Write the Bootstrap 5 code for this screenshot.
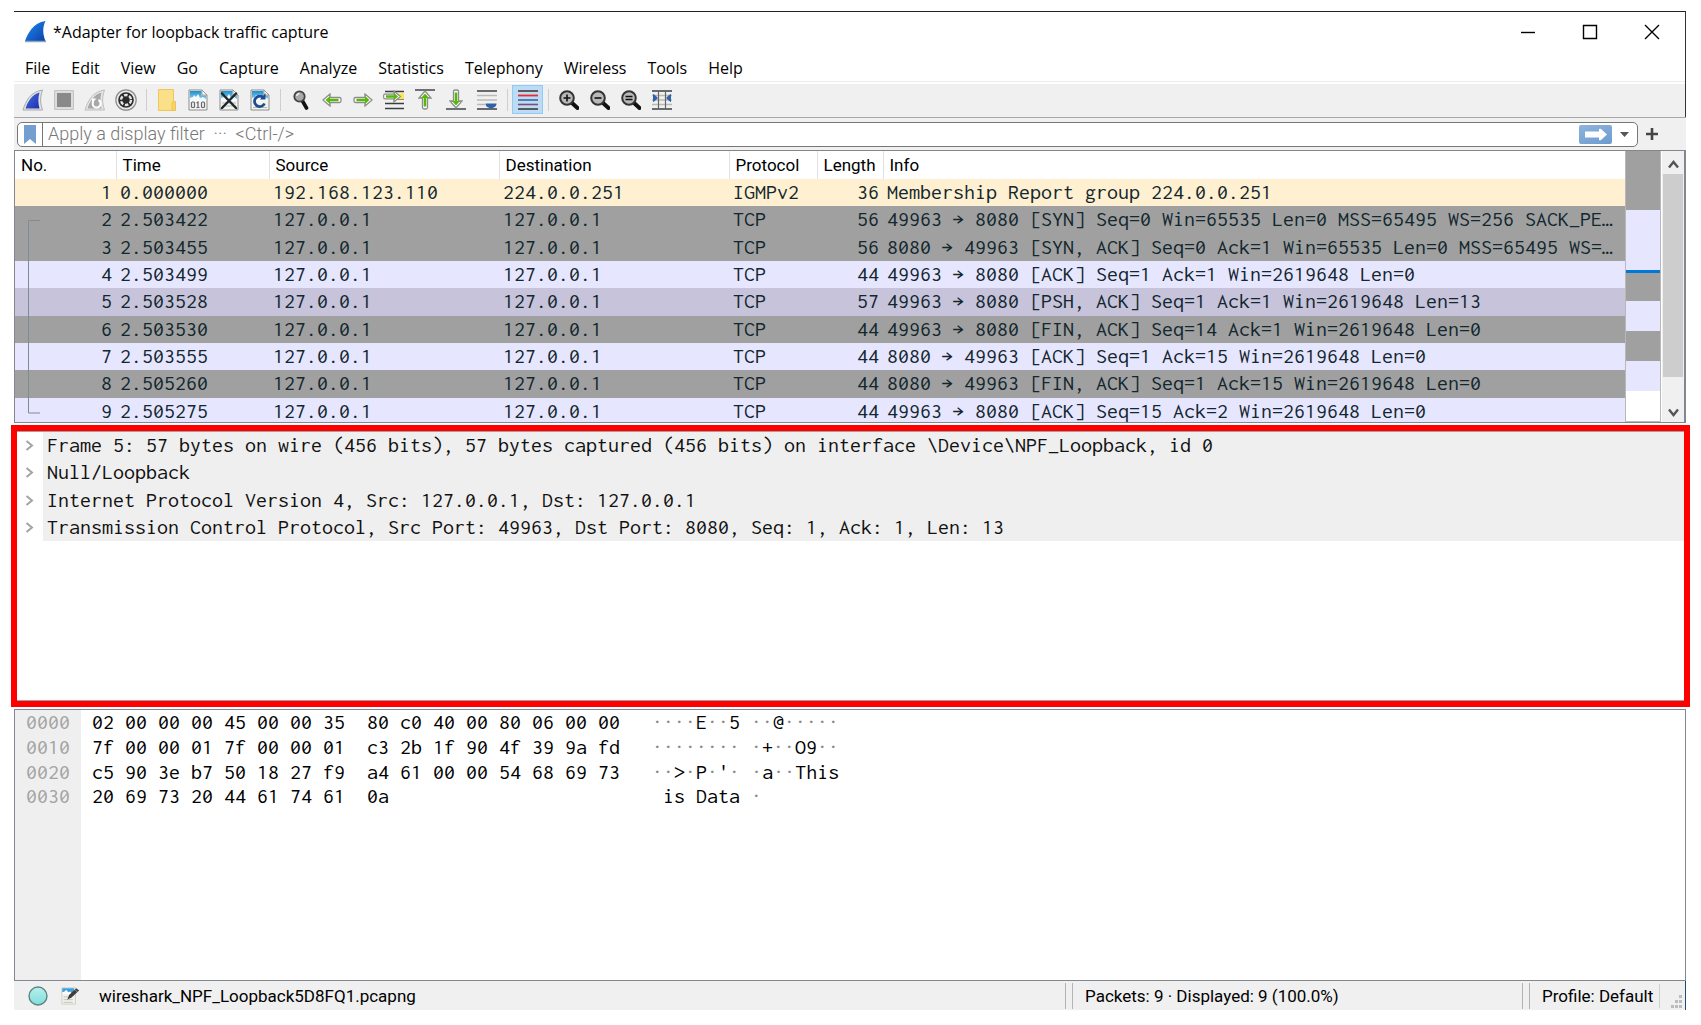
<!DOCTYPE html>
<html lang="en">
<head>
<meta charset="utf-8">
<meta name="viewport" content="width=device-width, initial-scale=1">
<title>*Adapter for loopback traffic capture</title>
<link href="https://cdn.jsdelivr.net/npm/bootstrap@5.3.0/dist/css/bootstrap.min.css" rel="stylesheet">
<style>
:root{--chrome:#f0f0f0;--edge:#828790;--ink:#12272e}
body{height:100vh;min-height:700px;padding:11px 15px 15px 14px;background:#fff;color:#000;font-family:Roboto,"Liberation Sans",sans-serif;font-size:17px;line-height:24px}
button{font:inherit;color:inherit}
svg{display:block;flex:none}
.appwin{border-top:1px solid #222}
.topzone{border-right:1px solid #333}
.segoe{font-family:"Open Sans","Noto Sans",sans-serif;font-size:16px;padding-left:6px}
.titlebar{height:39px;padding:0 2px 0 10px}
.winbtn{width:62px;height:39px;border:0;background:none;padding:0}
.menubar{height:31px;border-bottom:1px solid #ececec;font-family:"Open Sans","Noto Sans",sans-serif;font-size:16px}
.menubar a{color:#000;text-decoration:none;padding:4px 10px 0 11px;line-height:26px}
.toolbar{height:33px;margin-top:2px;padding:0 0 2px 3px;background:var(--chrome)}
.tool{width:31px;height:29px;border:1px solid transparent;background:none;padding:0}
.tool.on{background:#bddcf4;border-color:#91c9f7}
.toolsep{width:10px;height:22px;display:flex;justify-content:center}
.toolsep::before{content:"";width:1px;background:#cfcfcf}
.filterbar{height:33px;padding:0 4px 0 3px;background:var(--chrome);border-top:1px solid #a8a8a8}
.filterbox{height:25px;border:1px solid #777;border-radius:5px;background:#fff;overflow:hidden}
.filterbox .markbtn{width:25px;border:0;border-right:1px solid #777;background:none;padding:0}
.filterbox input{border:0;outline:0;min-width:0;padding:0 5px;font-size:18px;font-weight:300;color:#444;background:none}
.filterbox input::placeholder{color:#777;opacity:1}
.gobtn{width:33px;height:19px;border:0;border-radius:2px;padding:0;background:linear-gradient(160deg,#8fb4dc,#6d9bd0)}
.plainbtn{border:0;background:none;padding:0}
.pane{border:1px solid var(--edge);background:#fff}
.pktpane{height:273px;border-right-width:2px}
.mono{font-family:Inconsolata,Consolas,"DejaVu Sans Mono",monospace;font-size:22px;line-height:25px;white-space:pre}
.pktlist{height:274px;table-layout:fixed;color:var(--ink);--bs-table-color:var(--ink)}
.pktlist>:not(caption)>*>*{padding:0 4px;height:27px;background:var(--row);color:var(--ink)}
.pktlist thead th{--row:#fff;padding-left:6px;height:28px;font-weight:400;color:#000;border-right:1px solid #e2e2e2;line-height:27px;white-space:nowrap}
.pktlist thead th:last-child{border-right:0}
.c-no{width:101px}.c-time{width:153px}.c-addr{width:230px}.c-proto{width:88px}.c-len{width:66px}
.r-igmp{--row:#fff0d2}.r-syn{--row:#a0a0a0}.r-tcp{--row:#e7e6ff}.r-sel{--row:#c6c3da}
.convline{position:absolute;left:13px;top:69px}
.minimap{width:36px;border:1px solid #b8b8b8;border-width:0 1px 1px}
.scroller{width:23px;flex:none;padding:0 1px;background:#f0f0f0;border-left:1px solid #fff}
.scroller .thumb{height:203px;background:#cdcdcd}
.detail{margin:2px -4px 0 -3px;height:282px;border:6px solid #f00;background:#fff;z-index:1}
.detail-in{border-top:1px solid #a0a0a0;border-bottom:1px solid #a0a0a0}
.tree{height:109px;list-style:none;margin:0;padding:0;color:#111}
.tree li{display:flex;align-items:stretch;flex:1}
.tree .tog{width:26px;border:0;background:none;padding:0 0 0 8px}
.tree span{flex:1;background:#efefef;padding-left:4px}
.hexpane{margin-top:2px}
.gutter{width:66px;background:#efefef;color:#a3a3a3;padding-left:11px}
.hexrows{height:99px;margin-top:1px;display:flex;flex-direction:column}
.hexrows>div{flex:1;line-height:22px}
.hexbytes{padding-left:11px}
.hexascii{padding-left:32px}
.hexascii i{font-style:normal;color:#888}
.statusbar{height:29px;padding-left:14px;background:var(--chrome);border-right:1px solid #1f4a73}
.filename{padding-left:19px}
.grips{width:8px;height:26px;border:1px solid #b4b4b4;border-width:0 1px}
.grips{flex:none}
.st-packets{width:449px;padding-left:12px}
.st-profile{width:130px;padding-left:12px;border-right:1px solid #cfcfcf}
</style>
<script src="https://cdn.jsdelivr.net/npm/bootstrap@5.3.0/dist/js/bootstrap.bundle.min.js"></script>
</head>
<body>
<svg width="0" height="0" class="position-absolute" aria-hidden="true">
<defs>
<linearGradient id="gfin" x1="0" y1="0" x2="1" y2="1"><stop offset="0" stop-color="#1f8df2"/><stop offset="1" stop-color="#0b3fa8"/></linearGradient>
<linearGradient id="gfin2" x1="0" y1="0" x2="1" y2="1"><stop offset="0" stop-color="#4a6fe0"/><stop offset="1" stop-color="#1c2fb0"/></linearGradient>
<linearGradient id="gsky" x1="0" y1="0" x2="0" y2="1"><stop offset="0" stop-color="#1f8fd0"/><stop offset="1" stop-color="#8fd0f0"/></linearGradient>
<linearGradient id="gled" x1="0" y1="0" x2="0" y2="1"><stop offset="0" stop-color="#b8f0ee"/><stop offset="1" stop-color="#7fdedb"/></linearGradient>
<symbol id="doc" viewBox="0 0 20 22"><path d="M1 1h13l5 5v15H1z" fill="#f4f4ee" stroke="#8a8f8c"/><path d="M2 2h11.500v4.500H18V11H2z" fill="url(#gsky)"/><path d="M2 12V9l3-1 1-2 2 2 2-3 2 4 3-1 3 2v2z" fill="#f7faf9"/><path d="M14 1v5h5z" fill="#fff" stroke="#8a8f8c" stroke-width=".8"/></symbol>
<symbol id="arr" viewBox="0 0 20 14"><path d="M1 7l7-6v3.500h9.500q1.500 0 1.500 1.500v2q0 1.500-1.500 1.500H8V13z" fill="#fff" stroke="#8c8c8c" stroke-width="1.300"/><path d="M3.500 7L8 3v2.700h8.500v2.600H8V11z" fill="#57b80a"/></symbol>
<symbol id="lens" viewBox="0 0 20 20"><path d="M12.500 12.500l6 5.500" stroke="#111" stroke-width="4" stroke-linecap="round"/><circle cx="8" cy="8" r="6.800" fill="#b9b9b9" stroke="#333" stroke-width="2"/></symbol>
</defs>
</svg>
<div class="appwin d-flex flex-column h-100">
 <div class="topzone">
  <header class="titlebar d-flex align-items-center">
   <svg width="23" height="23" viewBox="0 0 23 23"><path d="M1 21C4 13 9 3 21.500 1 18.500 7 18.500 14 21.500 21z" fill="url(#gfin)"/><path d="M1 21.500h21" stroke="#8ea4b8" stroke-width="1.500"/></svg>
   <div class="segoe flex-grow-1">*Adapter for loopback traffic capture</div>
   <button class="winbtn d-flex align-items-center justify-content-center" aria-label="Minimize"><svg width="16" height="16"><path d="M1 8.500h14" stroke="#000" stroke-width="1.400"/></svg></button>
   <button class="winbtn d-flex align-items-center justify-content-center" aria-label="Maximize"><svg width="16" height="16"><path d="M1.500 1.500h13v13h-13z" fill="none" stroke="#000" stroke-width="1.400"/></svg></button>
   <button class="winbtn d-flex align-items-center justify-content-center" aria-label="Close"><svg width="16" height="16"><path d="M1 1l14 14M15 1L1 15" stroke="#000" stroke-width="1.400"/></svg></button>
  </header>
  <nav class="menubar d-flex" aria-label="Menu"><a href="#">File</a><a href="#">Edit</a><a href="#">View</a><a href="#">Go</a><a href="#">Capture</a><a href="#">Analyze</a><a href="#">Statistics</a><a href="#">Telephony</a><a href="#">Wireless</a><a href="#">Tools</a><a href="#">Help</a></nav>
  <div class="toolbar d-flex align-items-center" role="toolbar">
   <button class="tool d-flex align-items-center justify-content-center" aria-label="Start capture"><svg width="22" height="22" viewBox="0 0 22 22"><path d="M1 21C4 12 8 3 20.500 1 18 8 18 14 20.500 21z" fill="#e4e4e4" stroke="#a9a9a9"/><path d="M3.500 19.500C6 12 10 5.500 17.500 3.500 16 9 16 14 17.500 19.500z" fill="url(#gfin2)"/></svg></button>
   <button class="tool d-flex align-items-center justify-content-center" aria-label="Stop capture"><svg width="20" height="20"><path d="M.5.5h19v19H.5z" fill="#dcdcdc" stroke="#c4c4c4"/><path d="M3 3h14v14H3z" fill="#8a8a8a"/></svg></button>
   <button class="tool d-flex align-items-center justify-content-center" aria-label="Restart capture"><svg width="22" height="22" viewBox="0 0 22 22"><path d="M1 21C4 12 8 3 20.500 1 18 8 18 14 20.500 21z" fill="#e6e6e6" stroke="#bdbdbd"/><path d="M3.500 19.500C6 12 10 5.500 17.500 3.500 16 9 16 14 17.500 19.500z" fill="#a8a8a8"/><path d="M14.500 11a4 4 0 1 1-5 1" fill="none" stroke="#fff" stroke-width="2"/><path d="M8 14V9.500h4.500z" fill="#fff"/></svg></button>
   <button class="tool d-flex align-items-center justify-content-center" aria-label="Capture options"><svg width="22" height="22" viewBox="0 0 22 22"><circle cx="11" cy="11" r="10.200" fill="#e8e8e8" stroke="#8d8d8d" stroke-width="1.200"/><circle cx="11" cy="11" r="7.800" fill="#2a2a2a"/><circle cx="11" cy="11" r="5" fill="none" stroke="#e4e4e4" stroke-width="2.400" stroke-dasharray="3.600 1.636"/><circle cx="11" cy="11" r="2.600" fill="#2a2a2a"/></svg></button>
   <span class="toolsep"></span>
   <button class="tool d-flex align-items-center justify-content-center" aria-label="Open"><svg width="18" height="22" viewBox="0 0 18 22"><path d="M.5.5h15v12h2v9H.5z" fill="#fbe08a" stroke="#eec65a"/><path d="M14 21.500v-8l2-1.500 1.500 1.500v8z" fill="#f8d368" stroke="#e9bf4f" stroke-width=".8"/></svg></button>
   <button class="tool d-flex align-items-center justify-content-center" aria-label="Save"><svg width="20" height="22" viewBox="0 0 20 22"><use href="#doc"/><g fill="none" stroke="#667" stroke-width="1.200"><rect x="3.500" y="13" width="3" height="5.500" rx="1"/><path d="M8.500 14l1.500-1v5.500M8.500 18.500h3"/><rect x="13.500" y="13" width="3" height="5.500" rx="1"/></g></svg></button>
   <button class="tool d-flex align-items-center justify-content-center" aria-label="Close file"><svg width="20" height="22" viewBox="0 0 20 22"><use href="#doc"/><path d="M3 14h14M3 17h14" stroke="#b8b8b0"/><path d="M3 4.500L17 19M17 4.500L3 19" stroke="#1c2830" stroke-width="2.500" stroke-linecap="round"/></svg></button>
   <button class="tool d-flex align-items-center justify-content-center" aria-label="Reload"><svg width="20" height="22" viewBox="0 0 20 22"><use href="#doc"/><path d="M3 18.500h14" stroke="#b8b8b0"/><path d="M14.500 14.500a5.200 5.200 0 1 1-2-6.500" fill="none" stroke="#1f4c91" stroke-width="2.800"/><path d="M10 10.500L15.500 4v6.500z" fill="#1f4c91"/></svg></button>
   <span class="toolsep"></span>
   <button class="tool d-flex align-items-center justify-content-center" aria-label="Find packet"><svg width="16" height="20" viewBox="0 0 16 20"><path d="M9.500 11l4 7" stroke="#111" stroke-width="3.600" stroke-linecap="round"/><circle cx="6.500" cy="6.500" r="5.200" fill="#a9a9a9" stroke="#444" stroke-width="1.800"/><path d="M3.500 6a3.500 3.500 0 0 1 3-2.500" stroke="#f2f2f2" stroke-width="1.500" fill="none"/></svg></button>
   <button class="tool d-flex align-items-center justify-content-center" aria-label="Previous packet"><svg width="20" height="14"><use href="#arr"/></svg></button>
   <button class="tool d-flex align-items-center justify-content-center" aria-label="Next packet"><svg width="20" height="14" viewBox="0 0 20 14"><use href="#arr" transform="matrix(-1 0 0 1 20 0)" width="20" height="14"/></svg></button>
   <button class="tool d-flex align-items-center justify-content-center" aria-label="Go to packet"><svg width="23" height="20" viewBox="0 0 23 20"><path d="M3 1.500h19M3 13.500h19M3 18.500h19" stroke="#3a3f42" stroke-width="1.600"/><path d="M16 3.500h6v6h-6z" fill="#ffe640"/><path d="M15 9.500h7" stroke="#888"/><g transform="matrix(-1 0 0 1 20 0)"><use href="#arr" width="20" height="13"/></g></svg></button>
   <button class="tool d-flex align-items-center justify-content-center" aria-label="First packet"><svg width="20" height="21" viewBox="0 0 20 21"><path d="M0 1h20" stroke="#4a5052" stroke-width="1.600"/><g transform="matrix(0 1 -1 0 17 1)"><use href="#arr" width="20" height="14"/></g></svg></button>
   <button class="tool d-flex align-items-center justify-content-center" aria-label="Last packet"><svg width="20" height="21" viewBox="0 0 20 21"><path d="M0 20h20" stroke="#4a5052" stroke-width="1.600"/><g transform="matrix(0 -1 1 0 3 20)"><use href="#arr" width="20" height="14"/></g></svg></button>
   <button class="tool d-flex align-items-center justify-content-center" aria-label="Auto scroll"><svg width="20" height="20" viewBox="0 0 20 20"><path d="M0 1h20M0 19h20" stroke="#3a3f42" stroke-width="1.600"/><path d="M0 5.500h20M0 10h20M0 14.500h8" stroke="#b9bab3" stroke-width="1.400"/><path d="M8.500 13.500h11q0 3-3 4l-2.500 1.500-2.500-1.500q-3-1-3-4z" fill="#2f62a8"/></svg></button>
   <span class="toolsep"></span>
   <button class="tool on d-flex align-items-center justify-content-center" aria-label="Colorize" aria-pressed="true"><svg width="20" height="20" viewBox="0 0 20 20"><path d="M0 1h20M0 19h20" stroke="#333" stroke-width="1.600"/><path d="M0 5.500h20" stroke="#ef2929" stroke-width="1.800"/><path d="M0 10h20" stroke="#3a66a8" stroke-width="1.600"/><path d="M0 14.500h20" stroke="#75507b" stroke-width="1.600"/></svg></button>
   <span class="toolsep"></span>
   <button class="tool d-flex align-items-center justify-content-center" aria-label="Zoom in"><svg width="20" height="20" viewBox="0 0 20 20"><use href="#lens"/><path d="M4.500 8h7M8 4.500v7" stroke="#111" stroke-width="1.600"/></svg></button>
   <button class="tool d-flex align-items-center justify-content-center" aria-label="Zoom out"><svg width="20" height="20" viewBox="0 0 20 20"><use href="#lens"/><path d="M4.500 8h7" stroke="#111" stroke-width="1.600"/></svg></button>
   <button class="tool d-flex align-items-center justify-content-center" aria-label="Normal size"><svg width="20" height="20" viewBox="0 0 20 20"><use href="#lens"/><path d="M4.500 6.500h7M4.500 9.500h7" stroke="#111" stroke-width="1.500"/></svg></button>
   <button class="tool d-flex align-items-center justify-content-center" aria-label="Resize columns"><svg width="20" height="20" viewBox="0 0 20 20"><path d="M0 5.500h20M0 10h20M0 14.500h20" stroke="#b9bab3" stroke-width="1.300"/><path d="M0 1h20M0 19h20" stroke="#3a3f42" stroke-width="1.600"/><path d="M6.500 1v18M13.500 1v18" stroke="#666" stroke-width="1.200"/><path d="M1 4q1 0 5 4-4 4-5 4zM19 4q-1 0-5 4 4 4 5 4z" fill="#2f62a8"/></svg></button>
  </div>
 </div>
 <form class="filterbar d-flex align-items-center" onsubmit="return false">
  <div class="filterbox d-flex align-items-stretch flex-grow-1">
   <button type="button" class="markbtn d-flex align-items-center justify-content-center" aria-label="Bookmarks"><svg width="12" height="19"><path d="M0 0h12v19l-6-5-6 5z" fill="#729fcf"/></svg></button>
   <input class="flex-grow-1" type="text" aria-label="Display filter" placeholder="Apply a display filter  ···  &lt;Ctrl-/&gt;">
   <button class="gobtn align-self-center d-flex align-items-center justify-content-center" aria-label="Apply"><svg width="24" height="13" viewBox="0 0 24 13"><path d="M1 3.500h14V1q1-.5 2 0l6 5.500-6 5.500q-1 .5-2 0V9.500H1z" fill="#fff"/></svg></button>
   <button type="button" class="plainbtn px-2 d-flex align-items-center" aria-label="Recent filters"><svg width="9" height="5"><path d="M0 0h9l-4.500 5z" fill="#555"/></svg></button>
  </div>
  <button type="button" class="plainbtn px-2 me-3" aria-label="Add filter button"><svg width="12" height="12"><path d="M6 0v12M0 6h12" stroke="#444" stroke-width="2.600"/></svg></button>
 </form>
 <section class="pane pktpane d-flex flex-shrink-0">
  <div class="position-relative flex-grow-1 overflow-hidden">
   <table class="table table-borderless pktlist mb-0">
    <colgroup><col class="c-no"><col class="c-time"><col class="c-addr"><col class="c-addr"><col class="c-proto"><col class="c-len"><col></colgroup>
    <thead><tr><th>No.</th><th>Time</th><th>Source</th><th>Destination</th><th>Protocol</th><th>Length</th><th>Info</th></tr></thead>
    <tbody class="mono">
<tr class="r-igmp"><td class="text-end">1</td><td>0.000000</td><td>192.168.123.110</td><td>224.0.0.251</td><td>IGMPv2</td><td class="text-end">36</td><td>Membership Report group 224.0.0.251</td></tr>
<tr class="r-syn"><td class="text-end">2</td><td>2.503422</td><td>127.0.0.1</td><td>127.0.0.1</td><td>TCP</td><td class="text-end">56</td><td>49963 → 8080 [SYN] Seq=0 Win=65535 Len=0 MSS=65495 WS=256 SACK_PE…</td></tr>
<tr class="r-syn"><td class="text-end">3</td><td>2.503455</td><td>127.0.0.1</td><td>127.0.0.1</td><td>TCP</td><td class="text-end">56</td><td>8080 → 49963 [SYN, ACK] Seq=0 Ack=1 Win=65535 Len=0 MSS=65495 WS=…</td></tr>
<tr class="r-tcp"><td class="text-end">4</td><td>2.503499</td><td>127.0.0.1</td><td>127.0.0.1</td><td>TCP</td><td class="text-end">44</td><td>49963 → 8080 [ACK] Seq=1 Ack=1 Win=2619648 Len=0</td></tr>
<tr class="r-sel"><td class="text-end">5</td><td>2.503528</td><td>127.0.0.1</td><td>127.0.0.1</td><td>TCP</td><td class="text-end">57</td><td>49963 → 8080 [PSH, ACK] Seq=1 Ack=1 Win=2619648 Len=13</td></tr>
<tr class="r-syn"><td class="text-end">6</td><td>2.503530</td><td>127.0.0.1</td><td>127.0.0.1</td><td>TCP</td><td class="text-end">44</td><td>49963 → 8080 [FIN, ACK] Seq=14 Ack=1 Win=2619648 Len=0</td></tr>
<tr class="r-tcp"><td class="text-end">7</td><td>2.503555</td><td>127.0.0.1</td><td>127.0.0.1</td><td>TCP</td><td class="text-end">44</td><td>8080 → 49963 [ACK] Seq=1 Ack=15 Win=2619648 Len=0</td></tr>
<tr class="r-syn"><td class="text-end">8</td><td>2.505260</td><td>127.0.0.1</td><td>127.0.0.1</td><td>TCP</td><td class="text-end">44</td><td>8080 → 49963 [FIN, ACK] Seq=1 Ack=15 Win=2619648 Len=0</td></tr>
<tr class="r-tcp"><td class="text-end">9</td><td>2.505275</td><td>127.0.0.1</td><td>127.0.0.1</td><td>TCP</td><td class="text-end">44</td><td>49963 → 8080 [ACK] Seq=15 Ack=2 Win=2619648 Len=0</td></tr>
    </tbody>
   </table>
   <svg class="convline" width="13" height="194"><path d="M12 .5H.5v192.500H12" fill="none" stroke="#7f8c94"/></svg>
  </div>
  <svg class="minimap" height="271" viewBox="0 0 34 270" preserveAspectRatio="none"><path d="M0 0h34v59H0zM0 122h34v28H0zM0 180h34v30H0z" fill="#a0a0a0"/><path d="M0 59h34v60H0zM0 150h34v30H0zM0 210h34v30H0z" fill="#e7e6ff"/><path d="M0 119h34v3H0z" fill="#0078d7"/></svg>
  <div class="scroller d-flex flex-column">
   <button class="plainbtn d-flex justify-content-center pt-2 pb-1" aria-label="Scroll up"><svg width="11" height="11"><path d="M1 8.500L5.500 3 10 8.500" fill="none" stroke="#555" stroke-width="2.400"/></svg></button>
   <div class="thumb"></div>
   <button class="plainbtn d-flex justify-content-center align-items-end flex-grow-1 pb-1" aria-label="Scroll down"><svg width="11" height="11"><path d="M1 2.500L5.500 8 10 2.500" fill="none" stroke="#555" stroke-width="2.400"/></svg></button>
  </div>
 </section>
 <section class="detail position-relative flex-shrink-0">
  <div class="detail-in h-100">
   <ul class="tree mono d-flex flex-column">
    <li><button class="tog" aria-label="Expand"><svg width="9" height="13"><path d="M1.500 2L7 6.500 1.500 11" fill="none" stroke="#a3a3a3" stroke-width="2"/></svg></button><span>Frame 5: 57 bytes on wire (456 bits), 57 bytes captured (456 bits) on interface \Device\NPF_Loopback, id 0</span></li>
    <li><button class="tog" aria-label="Expand"><svg width="9" height="13"><path d="M1.500 2L7 6.500 1.500 11" fill="none" stroke="#a3a3a3" stroke-width="2"/></svg></button><span>Null/Loopback</span></li>
    <li><button class="tog" aria-label="Expand"><svg width="9" height="13"><path d="M1.500 2L7 6.500 1.500 11" fill="none" stroke="#a3a3a3" stroke-width="2"/></svg></button><span>Internet Protocol Version 4, Src: 127.0.0.1, Dst: 127.0.0.1</span></li>
    <li><button class="tog" aria-label="Expand"><svg width="9" height="13"><path d="M1.500 2L7 6.500 1.500 11" fill="none" stroke="#a3a3a3" stroke-width="2"/></svg></button><span>Transmission Control Protocol, Src Port: 49963, Dst Port: 8080, Seq: 1, Ack: 1, Len: 13</span></li>
   </ul>
  </div>
 </section>
 <section class="pane hexpane d-flex flex-grow-1 mono">
  <div class="gutter"><div class="hexrows"><div>0000</div><div>0010</div><div>0020</div><div>0030</div></div></div>
  <div class="hexrows hexbytes"><div>02 00 00 00 45 00 00 35  80 c0 40 00 80 06 00 00</div><div>7f 00 00 01 7f 00 00 01  c3 2b 1f 90 4f 39 9a fd</div><div>c5 90 3e b7 50 18 27 f9  a4 61 00 00 54 68 69 73</div><div>20 69 73 20 44 61 74 61  0a</div></div>
  <div class="hexrows hexascii"><div><i>····</i>E<i>··</i>5 <i>··</i>@<i>·····</i></div><div><i>········</i> <i>·</i>+<i>··</i>O9<i>··</i></div><div><i>··</i>&gt;<i>·</i>P<i>·</i>'<i>·</i> <i>·</i>a<i>··</i>This</div><div> is Data <i>·</i></div></div>
 </section>
 <footer class="statusbar d-flex align-items-center flex-shrink-0">
  <button class="plainbtn" aria-label="Expert information"><svg width="20" height="20"><circle cx="10" cy="10" r="9" fill="url(#gled)" stroke="#5f8583" stroke-width="1.400"/></svg></button>
  <button class="plainbtn ms-2 ps-1" aria-label="Capture comments"><svg width="20" height="20" viewBox="0 0 22 20"><path d="M2 1h15v18H2z" fill="#f1f1ec" stroke="#cfcfc8"/><path d="M2.500 1.500h13v6h-13z" fill="#3c9fdc"/><path d="M2.500 8V6L5 5l2-2 2 3 3-1v3z" fill="#fff"/><path d="M4 11h5M4 14h10M4 17h10" stroke="#c2c2bb"/><path d="M8 14l2-5 8-7.500 3 2.500-8 7.500z" fill="#3d3d3d"/><path d="M17 3.500l2 2" stroke="#aaa"/></svg></button>
  <span class="flex-grow-1 filename">wireshark_NPF_Loopback5D8FQ1.pcapng</span>
  <span class="grips"></span><span class="st-packets">Packets: 9 · Displayed: 9 (100.0%)</span>
  <span class="grips"></span><span class="st-profile">Profile: Default</span>
  <svg width="25" height="26"><path d="M19 12h3v3h-3zM15 17h3v3h-3zM19 17h3v3h-3zM11 22h3v3h-3zM15 22h3v3h-3zM19 22h3v3h-3z" fill="#bcbcbc"/></svg>
 </footer>
</div>
</body>
</html>
